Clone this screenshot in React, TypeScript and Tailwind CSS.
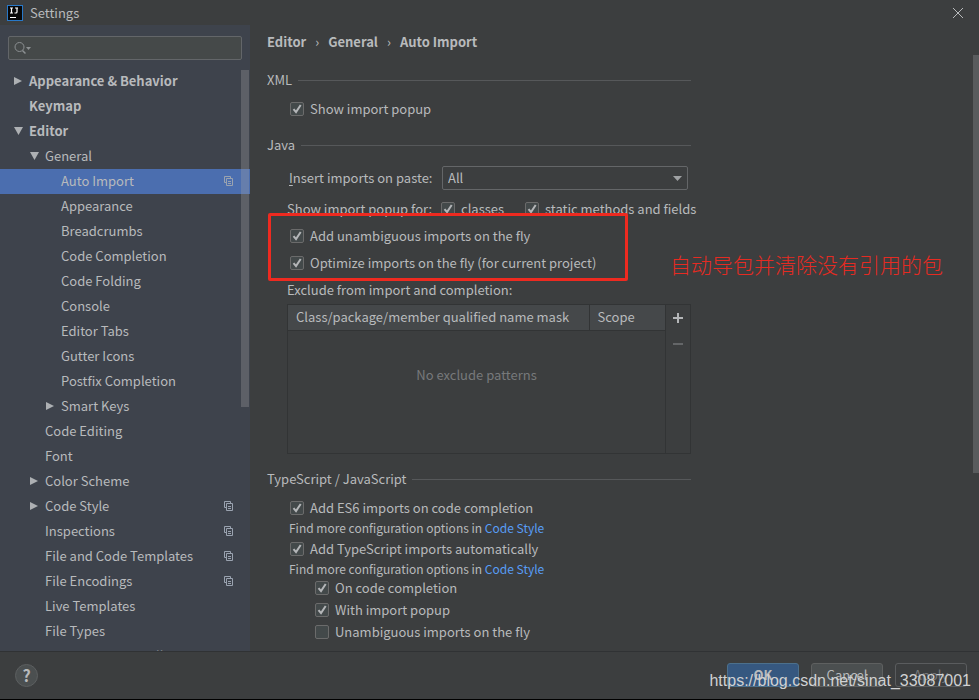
import React from "react";

type TreeItem = { label: string; depth: number; arrow?: "open" | "closed"; copy?: boolean; selected?: boolean; bold?: boolean };

const tree: TreeItem[] = [
  { label: "Appearance & Behavior", depth: 0, arrow: "closed", bold: true },
  { label: "Keymap", depth: 0, bold: true },
  { label: "Editor", depth: 0, arrow: "open", bold: true },
  { label: "General", depth: 1, arrow: "open" },
  { label: "Auto Import", depth: 2, copy: true, selected: true },
  { label: "Appearance", depth: 2 },
  { label: "Breadcrumbs", depth: 2 },
  { label: "Code Completion", depth: 2 },
  { label: "Code Folding", depth: 2 },
  { label: "Console", depth: 2 },
  { label: "Editor Tabs", depth: 2 },
  { label: "Gutter Icons", depth: 2 },
  { label: "Postfix Completion", depth: 2 },
  { label: "Smart Keys", depth: 2, arrow: "closed" },
  { label: "Code Editing", depth: 1 },
  { label: "Font", depth: 1 },
  { label: "Color Scheme", depth: 1, arrow: "closed" },
  { label: "Code Style", depth: 1, arrow: "closed", copy: true },
  { label: "Inspections", depth: 1, copy: true },
  { label: "File and Code Templates", depth: 1, copy: true },
  { label: "File Encodings", depth: 1, copy: true },
  { label: "Live Templates", depth: 1 },
  { label: "File Types", depth: 1 },
  { label: "Embedded Controllers", depth: 1 },
];

const indents = ["pl-3", "pl-7", "pl-11"];

function Arrow({ kind }: { kind?: "open" | "closed" }) {
  return (
    <svg className="mr-[5px] h-3 w-3 shrink-0 fill-[#adb0b3]" viewBox="0 0 12 12" aria-hidden="true">
      {kind === "closed" && <path d="M2 2v8l8-4z" />}
      {kind === "open" && <path d="M2 2h9l-4.500 8z" />}
    </svg>
  );
}

function CopyIcon() {
  return (
    <svg className="h-[10px] w-[10px] shrink-0" viewBox="0 0 10 10" fill="none" stroke="#9aa3b0" aria-hidden="true">
      <path d="M2 6.500H.5v-6h6V2M2.500 2.500h6v7h-6zM4 5.500h3M4 7.500h3" />
    </svg>
  );
}

function Check({ label, checked = true }: { label: string; checked?: boolean }) {
  return (
    <label className="flex h-5 items-center gap-[6px] whitespace-nowrap">
      <span className="grid shrink-0">
        <input
          type="checkbox"
          defaultChecked={checked}
          className="peer col-start-1 row-start-1 h-[14px] w-[14px] appearance-none rounded-xs border border-[#6b6b6b] bg-[#43494a]"
        />
        <svg
          className="pointer-events-none invisible col-start-1 row-start-1 h-[14px] w-[14px] peer-checked:visible"
          viewBox="0 0 14 14"
          fill="none"
          stroke="#b4b6b8"
          strokeWidth="2"
          aria-hidden="true"
        >
          <path d="M3.500 7.200 6 10l4.700-7" />
        </svg>
      </span>
      {label}
    </label>
  );
}

function Heading({ children }: { children: string }) {
  return (
    <h2 className="flex h-5 items-center gap-[6px] whitespace-nowrap">
      {children}
      <span className="h-px flex-1 bg-[#56585a]" />
    </h2>
  );
}

function MoreOptions() {
  return (
    <p className="h-[18px] pl-[22px] text-[12px] leading-[18px] whitespace-nowrap">
      Find more configuration options in{" "}
      <a href="#code-style" className="text-[#589df6]">
        Code Style
      </a>
    </p>
  );
}

export default function App() {
  return (
    <div className="flex h-screen flex-col overflow-hidden border-b border-black bg-[#3c3e3f] font-['Noto_Sans_CJK_SC',sans-serif] text-[13px] leading-5 text-[#b8babc]">
      <header className="flex h-[25px] shrink-0 items-center gap-[7px] pr-4 pl-[7px]">
        <svg className="h-4 w-4" viewBox="0 0 16 16" aria-hidden="true">
          <path d="M0 0h16v16H0z" fill="#2878c8" />
          <path d="M1 1h14v14H1z" fill="#080808" />
          <path d="M3 3h3M4.500 3v5M3 8h3M8 3h3M10 3v4q0 1-1 1H7.500M3 12.500h6" stroke="#fff" strokeWidth="1.200" fill="none" />
        </svg>
        <h1 className="flex-1">Settings</h1>
        <button type="button" aria-label="Close">
          <svg className="h-[10px] w-[10px]" viewBox="0 0 10 10" stroke="#b8babc" aria-hidden="true">
            <path d="M0 0l10 10M10 0L0 10" />
          </svg>
        </button>
      </header>

      <div className="flex min-h-0 flex-1">
        <aside className="flex w-[250px] shrink-0 flex-col bg-[#3e434c] pt-[11px]">
          <label className="mr-2 ml-2 flex h-6 shrink-0 items-center rounded-xs border border-[#636669] bg-[#454949] pl-[5px]">
            <svg className="h-4 w-[18px] shrink-0" viewBox="0 0 18 16" fill="none" stroke="#8c9092" aria-hidden="true">
              <circle cx="5.500" cy="7" r="4.500" />
              <path d="M8.500 10.500l3 3" strokeWidth="1.500" />
              <path d="M12 7h5l-2.500 3z" fill="#8c9092" stroke="none" />
            </svg>
            <input type="text" aria-label="Search settings" className="min-w-0 flex-1 bg-transparent outline-none" />
          </label>
          <nav className="relative mt-[9px] min-h-0 flex-1 overflow-hidden">
            <ul>
              {tree.map((t) => (
                <li key={t.label} className={t.selected ? "bg-[#4b6eaf]" : ""}>
                  <a href="#settings" className={`flex h-[25px] items-center pr-4 pb-[2px] whitespace-nowrap ${indents[t.depth]} ${t.bold ? "font-bold" : ""}`}>
                    <Arrow kind={t.arrow} />
                    <span className="flex-1">{t.label}</span>
                    {t.copy && <CopyIcon />}
                  </a>
                </li>
              ))}
            </ul>
            <div className="absolute top-px right-px h-[337px] w-2 bg-[#a6a6a6]/30" />
          </nav>
        </aside>

        <main className="relative min-w-0 flex-1 overflow-hidden pl-[17px]">
          <nav aria-label="Breadcrumb" className="flex h-[34px] items-center gap-[9px] font-bold">
            <span>Editor</span>
            <span className="font-normal">›</span>
            <span>General</span>
            <span className="font-normal">›</span>
            <span>Auto Import</span>
          </nav>

          <div className="w-[424px] pt-[11px]">
            <Heading>XML</Heading>
            <div className="pt-[9px] pb-4 pl-[23px]">
              <Check label="Show import popup" />
            </div>

            <Heading>Java</Heading>
            <div className="pt-[11px] pl-5">
              <div className="flex h-6 items-center pr-[3px] pl-[2px]">
                <label htmlFor="paste" className="w-[153px] whitespace-nowrap">
                  <span className="underline underline-offset-2">I</span>nsert imports on paste:
                </label>
                <div className="grid flex-1 items-center">
                  <select id="paste" className="col-start-1 row-start-1 h-6 w-full appearance-none rounded-xs border border-[#646668] bg-[#3c3e3f] pl-[5px]">
                    <option>All</option>
                  </select>
                  <svg className="pointer-events-none col-start-1 row-start-1 mr-[6px] h-[5px] w-[9px] justify-self-end fill-[#9fa1a3]" viewBox="0 0 9 5" aria-hidden="true">
                    <path d="M0 0h9L4.500 5z" />
                  </svg>
                </div>
              </div>
              <div className="mt-[9px] flex h-5 items-center whitespace-nowrap">
                <span className="w-[154px] shrink-0">Show import popup for:</span>
                <span className="w-[84px] shrink-0">
                  <Check label="classes" />
                </span>
                <Check label="static methods and fields" />
              </div>
              <div className="relative mt-[7px] flex flex-col gap-[7px] pl-[3px]">
                <Check label="Add unambiguous imports on the fly" />
                <Check label="Optimize imports on the fly (for current project)" />
                <div className="pointer-events-none absolute -top-[13px] -left-[19px] h-[68px] w-[360px] rounded-xs border-3 border-[#ee2a20]" />
                <p className="absolute top-[23px] left-[383px] text-[21px] leading-[30px] font-light whitespace-nowrap text-[#e62b22]">
                  自动导包并清除没有引用的包
                </p>
              </div>
              <p className="mt-[7px]">Exclude from import and completion:</p>
              <div className="mt-1 flex h-[150px] border border-[#323435]">
                <div className="flex flex-1 flex-col">
                  <table className="w-full table-fixed border-collapse">
                    <thead>
                      <tr className="h-[25px] border-b border-[#323435] bg-[#45484a] text-left">
                        <th className="w-[301px] border-r border-[#323435] pl-2 font-normal">Class/package/member qualified name mask</th>
                        <th className="pl-2 font-normal">Scope</th>
                      </tr>
                    </thead>
                  </table>
                  <p className="pt-[34px] text-center text-[#77797b]">No exclude patterns</p>
                </div>
                <div className="flex w-[25px] flex-col items-center border-l border-[#323435]">
                  <button type="button" aria-label="Add" className="grid h-[26px] w-6 place-items-center">
                    <svg className="h-[10px] w-[10px]" viewBox="0 0 10 10" stroke="#b4b6b8" strokeWidth="2" aria-hidden="true">
                      <path d="M5 0v10M0 5h10" />
                    </svg>
                  </button>
                  <button type="button" aria-label="Remove" disabled className="grid h-[26px] w-6 place-items-center">
                    <svg className="h-[10px] w-[10px]" viewBox="0 0 10 10" stroke="#646668" strokeWidth="2" aria-hidden="true">
                      <path d="M0 5h10" />
                    </svg>
                  </button>
                </div>
              </div>
            </div>

            <div className="pt-[15px]">
              <Heading>TypeScript / JavaScript</Heading>
            </div>
            <div className="pt-[9px] pb-px pl-[23px]">
              <Check label="Add ES6 imports on code completion" />
            </div>
            <MoreOptions />
            <div className="pt-[2px] pb-px pl-[23px]">
              <Check label="Add TypeScript imports automatically" />
            </div>
            <MoreOptions />
            <div className="flex flex-col gap-[2px] pl-12">
              <Check label="On code completion" />
              <Check label="With import popup" />
              <Check label="Unambiguous imports on the fly" checked={false} />
            </div>
          </div>
          <div className="absolute top-[30px] right-0 h-[418px] w-[6px] bg-[#595b5d]" />
        </main>
      </div>

      <footer className="relative flex h-12 shrink-0 items-center gap-3 border-t border-[#303234] pr-3 pb-px pl-[15px]">
        <button type="button" aria-label="Help" className="grid h-[23px] w-[23px] place-items-center rounded-full border border-[#5c5f60] bg-[#4b4f50] text-[16px] leading-5 font-bold">
          ?
        </button>
        <span className="flex-1" />
        <button type="button" className="h-6 w-[72px] rounded-[3px] border border-[#4c708c] bg-[#365880] font-bold">OK</button>
        <button type="button" className="h-6 w-[72px] rounded-[3px] border border-[#5e6060] bg-[#4b4f50]">Cancel</button>
        <button type="button" disabled className="h-6 w-[72px] rounded-[3px] border border-[#5a5c5e] text-[#77797b]">Apply</button>
        <span className="pointer-events-none absolute right-2 bottom-2 font-['Liberation_Sans',sans-serif] text-[16px] leading-5 text-[#d0d1d2]">
          https://blog.csdn.net/sinat_33087001
        </span>
      </footer>
    </div>
  );
}
